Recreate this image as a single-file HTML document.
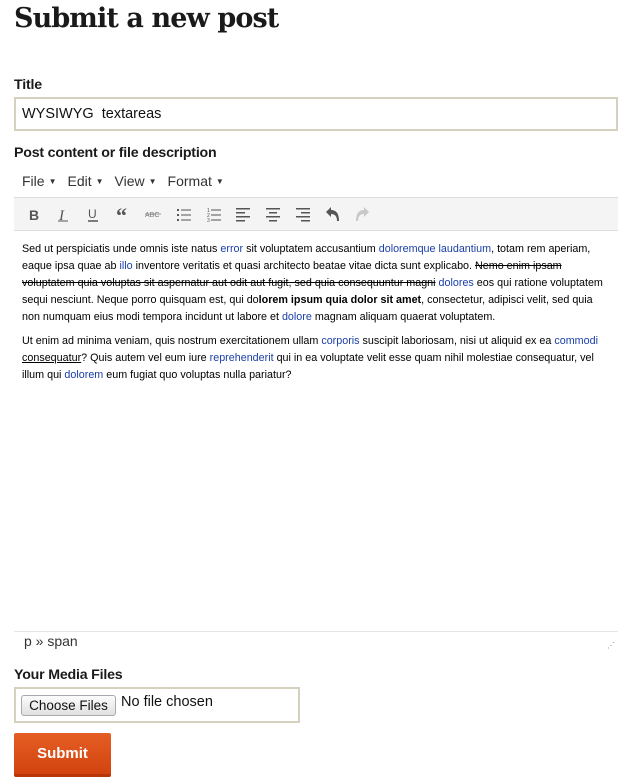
<!DOCTYPE html>
<html><head><meta charset="utf-8"><style>
*{box-sizing:border-box;margin:0;padding:0}
body{width:631px;height:782px;background:#fff;font-family:"Liberation Sans",sans-serif;color:#222;position:relative;overflow:hidden}
.abs{position:absolute}
h1{position:absolute;left:14px;top:3px;font-family:"DejaVu Serif","Liberation Serif",serif;font-weight:bold;font-size:27px;color:#1a1a1a;letter-spacing:-0.9px}
.lbl{position:absolute;left:14px;font-weight:bold;font-size:14.2px;color:#1a1a1a;letter-spacing:-0.2px}
.inp{position:absolute;left:14px;top:97px;width:604px;height:34px;border:2px solid #d6d1be;font-size:14.5px;padding:7px 6px;color:#111}
.menu{position:absolute;left:22px;top:173px;font-size:14px;color:#333;word-spacing:0}
.menu span{margin-right:11px}
.menu i{font-style:normal;font-size:8px;margin-left:4px;vertical-align:2px}
.tb{position:absolute;left:14px;top:197px;width:604px;height:34px;background:#f4f4f4;border-top:1px solid #ddd;border-bottom:1px solid #ddd}
.tb svg{position:absolute;top:9px}
.ed{position:absolute;left:22px;top:241px;width:590px;font-size:10.75px;line-height:17px;color:#000}
.ed p{margin-bottom:7px}
.b{color:#1a3ea8}
.sb{position:absolute;left:14px;top:631px;width:604px;height:22px;border-top:1px solid #e4e4e4;font-size:14px;color:#333;padding:1px 10px}
.file{position:absolute;left:14px;top:687px;width:286px;height:36px;border:2px solid #d6d1be}
.btnf{position:absolute;left:5px;top:6px;width:95px;height:21px;border:1px solid #aaa;border-radius:3px;background:linear-gradient(#fcfcfc,#e0e0e0);font-size:13.5px;text-align:center;line-height:19px;color:#111}
.sub{position:absolute;left:14px;top:733px;width:97px;height:44px;background:linear-gradient(#e45e24,#d3430f);border-bottom:3px solid #b83608;color:#fff;font-weight:bold;font-size:15px;text-align:center;line-height:42px;border-radius:2px}
</style></head><body>
<h1>Submit a new post</h1>
<div class="lbl" style="top:77px">Title</div>
<div class="inp">WYSIWYG&nbsp; textareas</div>
<div class="lbl" style="top:145px">Post content or file description</div>
<div class="menu"><span>File<i>▼</i></span><span>Edit<i>▼</i></span><span>View<i>▼</i></span><span>Format<i>▼</i></span></div>
<div class="tb">
<svg style="left:14px" width="14" height="16"><text x="1" y="13" font-family="Liberation Sans" font-weight="bold" font-size="14" fill="#555">B</text></svg>
<svg style="left:43px" width="14" height="16"><text x="2" y="13" font-family="Liberation Serif" font-style="italic" font-size="15" fill="#555">I</text><line x1="1" y1="14" x2="11" y2="14" stroke="#555"/></svg>
<svg style="left:73px" width="14" height="16"><text x="1" y="11" font-family="Liberation Sans" font-size="12" fill="#555">U</text><line x1="1" y1="14" x2="11" y2="14" stroke="#555" stroke-width="1.5"/></svg>
<svg style="left:102px" width="16" height="16"><text x="0" y="16" font-family="Liberation Serif" font-weight="bold" font-size="22" fill="#555">“</text></svg>
<svg style="left:131px" width="18" height="16"><text x="0" y="10" font-family="Liberation Sans" font-size="7" fill="#777">ABC</text><line x1="0" y1="7" x2="16" y2="7" stroke="#777" stroke-width=".7"/></svg>
<svg style="left:163px" width="16" height="16"><g fill="#555"><rect x="0" y="2" width="2" height="2"/><rect x="0" y="7" width="2" height="2"/><rect x="0" y="12" width="2" height="2"/><rect x="4" y="2.5" width="10" height="1"/><rect x="4" y="7.5" width="10" height="1"/><rect x="4" y="12.5" width="10" height="1"/></g></svg>
<svg style="left:193px" width="16" height="16"><g fill="#555"><text x="0" y="5" font-size="5" font-family="Liberation Sans">1</text><text x="0" y="10" font-size="5" font-family="Liberation Sans">2</text><text x="0" y="15" font-size="5" font-family="Liberation Sans">3</text><rect x="4" y="2.5" width="10" height="1"/><rect x="4" y="7.5" width="10" height="1"/><rect x="4" y="12.5" width="10" height="1"/></g></svg>
<svg style="left:222px" width="16" height="16"><g fill="#555"><rect x="0" y="1" width="14" height="1.5"/><rect x="0" y="5" width="9" height="1.5"/><rect x="0" y="9" width="14" height="1.5"/><rect x="0" y="13" width="9" height="1.5"/></g></svg>
<svg style="left:252px" width="16" height="16"><g fill="#555"><rect x="0" y="1" width="14" height="1.5"/><rect x="3" y="5" width="8" height="1.5"/><rect x="0" y="9" width="14" height="1.5"/><rect x="3" y="13" width="8" height="1.5"/></g></svg>
<svg style="left:282px" width="16" height="16"><g fill="#555"><rect x="0" y="1" width="14" height="1.5"/><rect x="5" y="5" width="9" height="1.5"/><rect x="0" y="9" width="14" height="1.5"/><rect x="5" y="13" width="9" height="1.5"/></g></svg>
<svg style="left:311px" width="18" height="18"><path d="M1 5 L6 0 L6 3 Q14 3 14 14 L12 14 Q12 7 6 7 L6 10 Z" fill="#555"/></svg>
<svg style="left:340px" width="18" height="18"><path d="M15 5 L10 0 L10 3 Q2 3 2 14 L4 14 Q4 7 10 7 L10 10 Z" fill="#c8c8c8"/></svg>
</div>
<div class="ed">
<p>Sed ut perspiciatis unde omnis iste natus <span class="b">error</span> sit voluptatem accusantium <span class="b">doloremque laudantium</span>, totam rem aperiam, eaque ipsa quae ab <span class="b">illo</span> inventore veritatis et quasi architecto beatae vitae dicta sunt explicabo. <s>Nemo enim ipsam voluptatem quia voluptas sit aspernatur aut odit aut fugit, sed quia consequuntur magni</s> <span class="b">dolores</span> eos qui ratione voluptatem sequi nesciunt. Neque porro quisquam est, qui do<b>lorem ipsum quia dolor sit amet</b>, consectetur, adipisci velit, sed quia non numquam eius modi tempora incidunt ut labore et <span class="b">dolore</span> magnam aliquam quaerat voluptatem.</p>
<p>Ut enim ad minima veniam, quis nostrum exercitationem ullam <span class="b">corporis</span> suscipit laboriosam, nisi ut aliquid ex ea <span class="b">commodi</span> <u>consequatur</u>? Quis autem vel eum iure <span class="b">reprehenderit</span> qui in ea voluptate velit esse quam nihil molestiae consequatur, vel illum qui <span class="b">dolorem</span> eum fugiat quo voluptas nulla pariatur?</p>
</div>
<div class="sb">p » span<span style="position:absolute;right:3px;top:9px;font-size:8px;color:#888">⋰</span></div>
<div class="lbl" style="top:667px">Your Media Files</div>
<div class="file"><div class="btnf">Choose Files</div><span class="abs" style="left:105px;top:5px;font-size:14.5px;color:#111">No file chosen</span></div>
<div class="sub">Submit</div>
</body></html>
